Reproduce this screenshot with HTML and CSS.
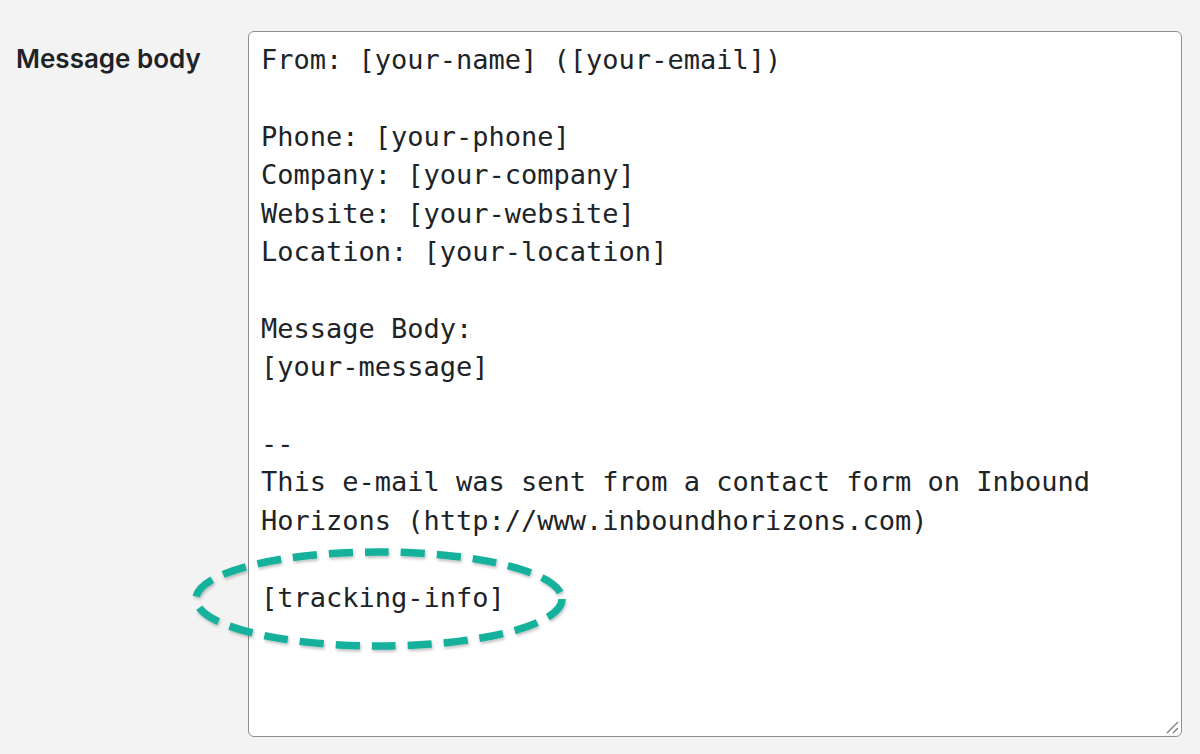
FILE: index.html
```html
<!DOCTYPE html>
<html>
<head>
<meta charset="utf-8">
<link rel="stylesheet" href="styles.css">
</head>
<body>
<div class="row">
  <div class="label">Message body</div>
  <div class="field">
    <div class="textarea">From: [your-name] ([your-email])

Phone: [your-phone]
Company: [your-company]
Website: [your-website]
Location: [your-location]

Message Body:
[your-message]

--
This e-mail was sent from a contact form on Inbound
Horizons (http://www.inboundhorizons.com)

[tracking-info]</div>
    <svg class="grip" width="14" height="14" viewBox="0 0 14 14"><path d="M2 13 L13 2 M8 13 L13 8" stroke="#7a7d82" stroke-width="1.4" fill="none"/></svg>
    <svg class="ellipse" width="400" height="130" viewBox="0 0 400 130">
      <defs><filter id="sh" x="-10%" y="-20%" width="120%" height="140%"><feDropShadow dx="1" dy="2" stdDeviation="1.5" flood-color="#000" flood-opacity="0.25"/></filter></defs>
      <ellipse cx="193" cy="65" rx="183" ry="47" fill="none" stroke="#16b19c" stroke-width="7.5" stroke-dasharray="24 12" filter="url(#sh)"/>
    </svg>
  </div>
</div>
</body>
</html>
```
FILE: styles.css
```css
html, body {
  margin: 0;
  padding: 0;
  background: #f3f3f3;
  width: 1200px;
  height: 754px;
  overflow: hidden;
}
.row {
  display: flex;
  padding: 31px 0 0 16px;
}
.label {
  width: 232px;
  font-family: Inter, "Liberation Sans", sans-serif;
  font-weight: 600;
  font-size: 26px;
  line-height: 56px;
  color: #1d2327;
}
.field {
  position: relative;
}
.textarea {
  box-sizing: border-box;
  width: 934px;
  height: 706px;
  background: #fff;
  border: 1px solid #8c8f94;
  border-radius: 6px;
  padding: 9px 12px;
  font-family: "DejaVu Sans Mono", "Liberation Mono", monospace;
  font-size: 27px;
  line-height: 38.4px;
  color: #1d2327;
  white-space: pre-wrap;
}
.grip {
  position: absolute;
  right: 3px;
  bottom: 3px;
}
.ellipse {
  position: absolute;
  left: -62px;
  top: 503px;
}
```
